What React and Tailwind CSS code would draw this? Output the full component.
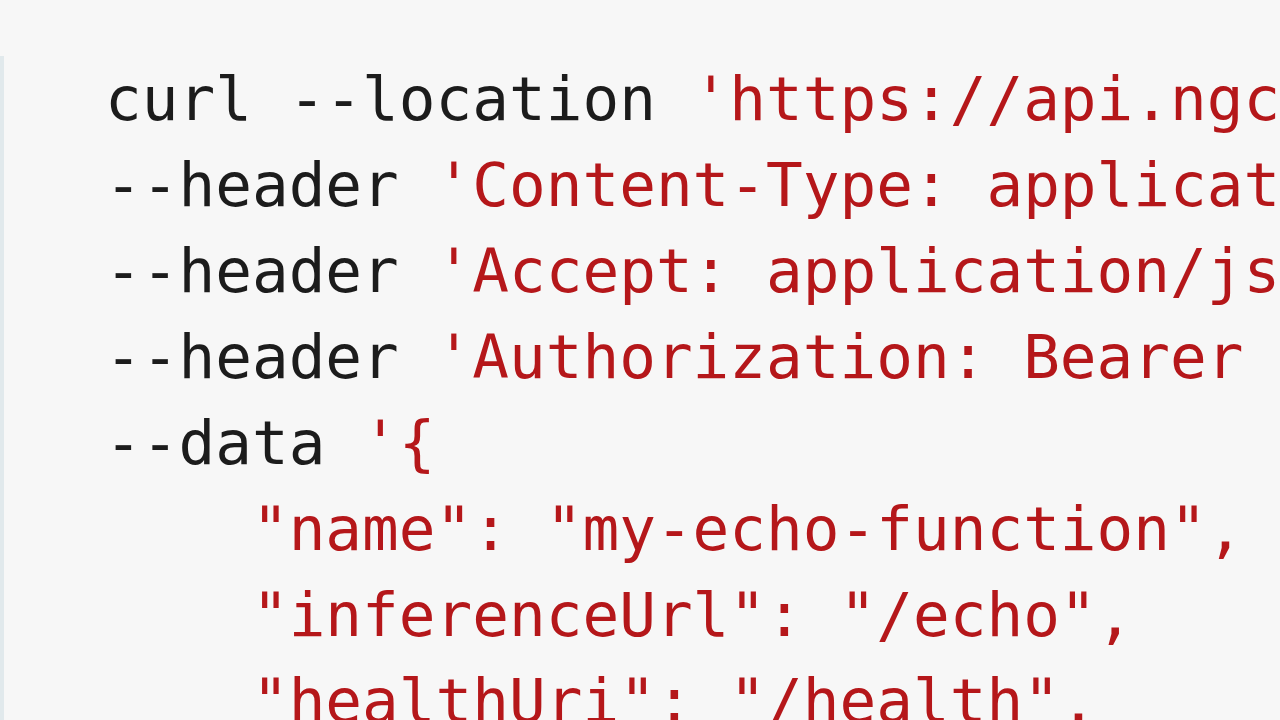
import React from 'react';

const lines = [
  [['curl --location ', 'k'], ["'https://api.ngc.nvidia.com/v2/nvcf/functions'", 's']],
  [['--header ', 'k'], ["'Content-Type: application/json'", 's']],
  [['--header ', 'k'], ["'Accept: application/json'", 's']],
  [['--header ', 'k'], ["'Authorization: Bearer $API_KEY'", 's']],
  [['--data ', 'k'], ["'{", 's']],
  [['    "name": "my-echo-function",', 's']],
  [['    "inferenceUrl": "/echo",', 's']],
  [['    "healthUri": "/health",', 's']],
];

const App = () => {
  return (
    <div className="w-[1280px] h-[720px] overflow-hidden bg-[#f7f7f7] pt-[56px]">
      {/* Code block */}
      <div className="h-full border-l-4 border-[#e1e9ec] pl-[101px]">
        <pre className="m-0 whitespace-pre text-[61px] leading-[86px] font-['DejaVu_Sans_Mono',monospace]">
          {lines.map((line, idx) => (
            <div key={idx}>
              {line.map(([text, kind], j) => (
                <span key={j} className={kind === 's' ? 'text-[#b5171a]' : 'text-[#1c1c1c]'}>
                  {text}
                </span>
              ))}
            </div>
          ))}
        </pre>
      </div>
    </div>
  );
};

export default App;
